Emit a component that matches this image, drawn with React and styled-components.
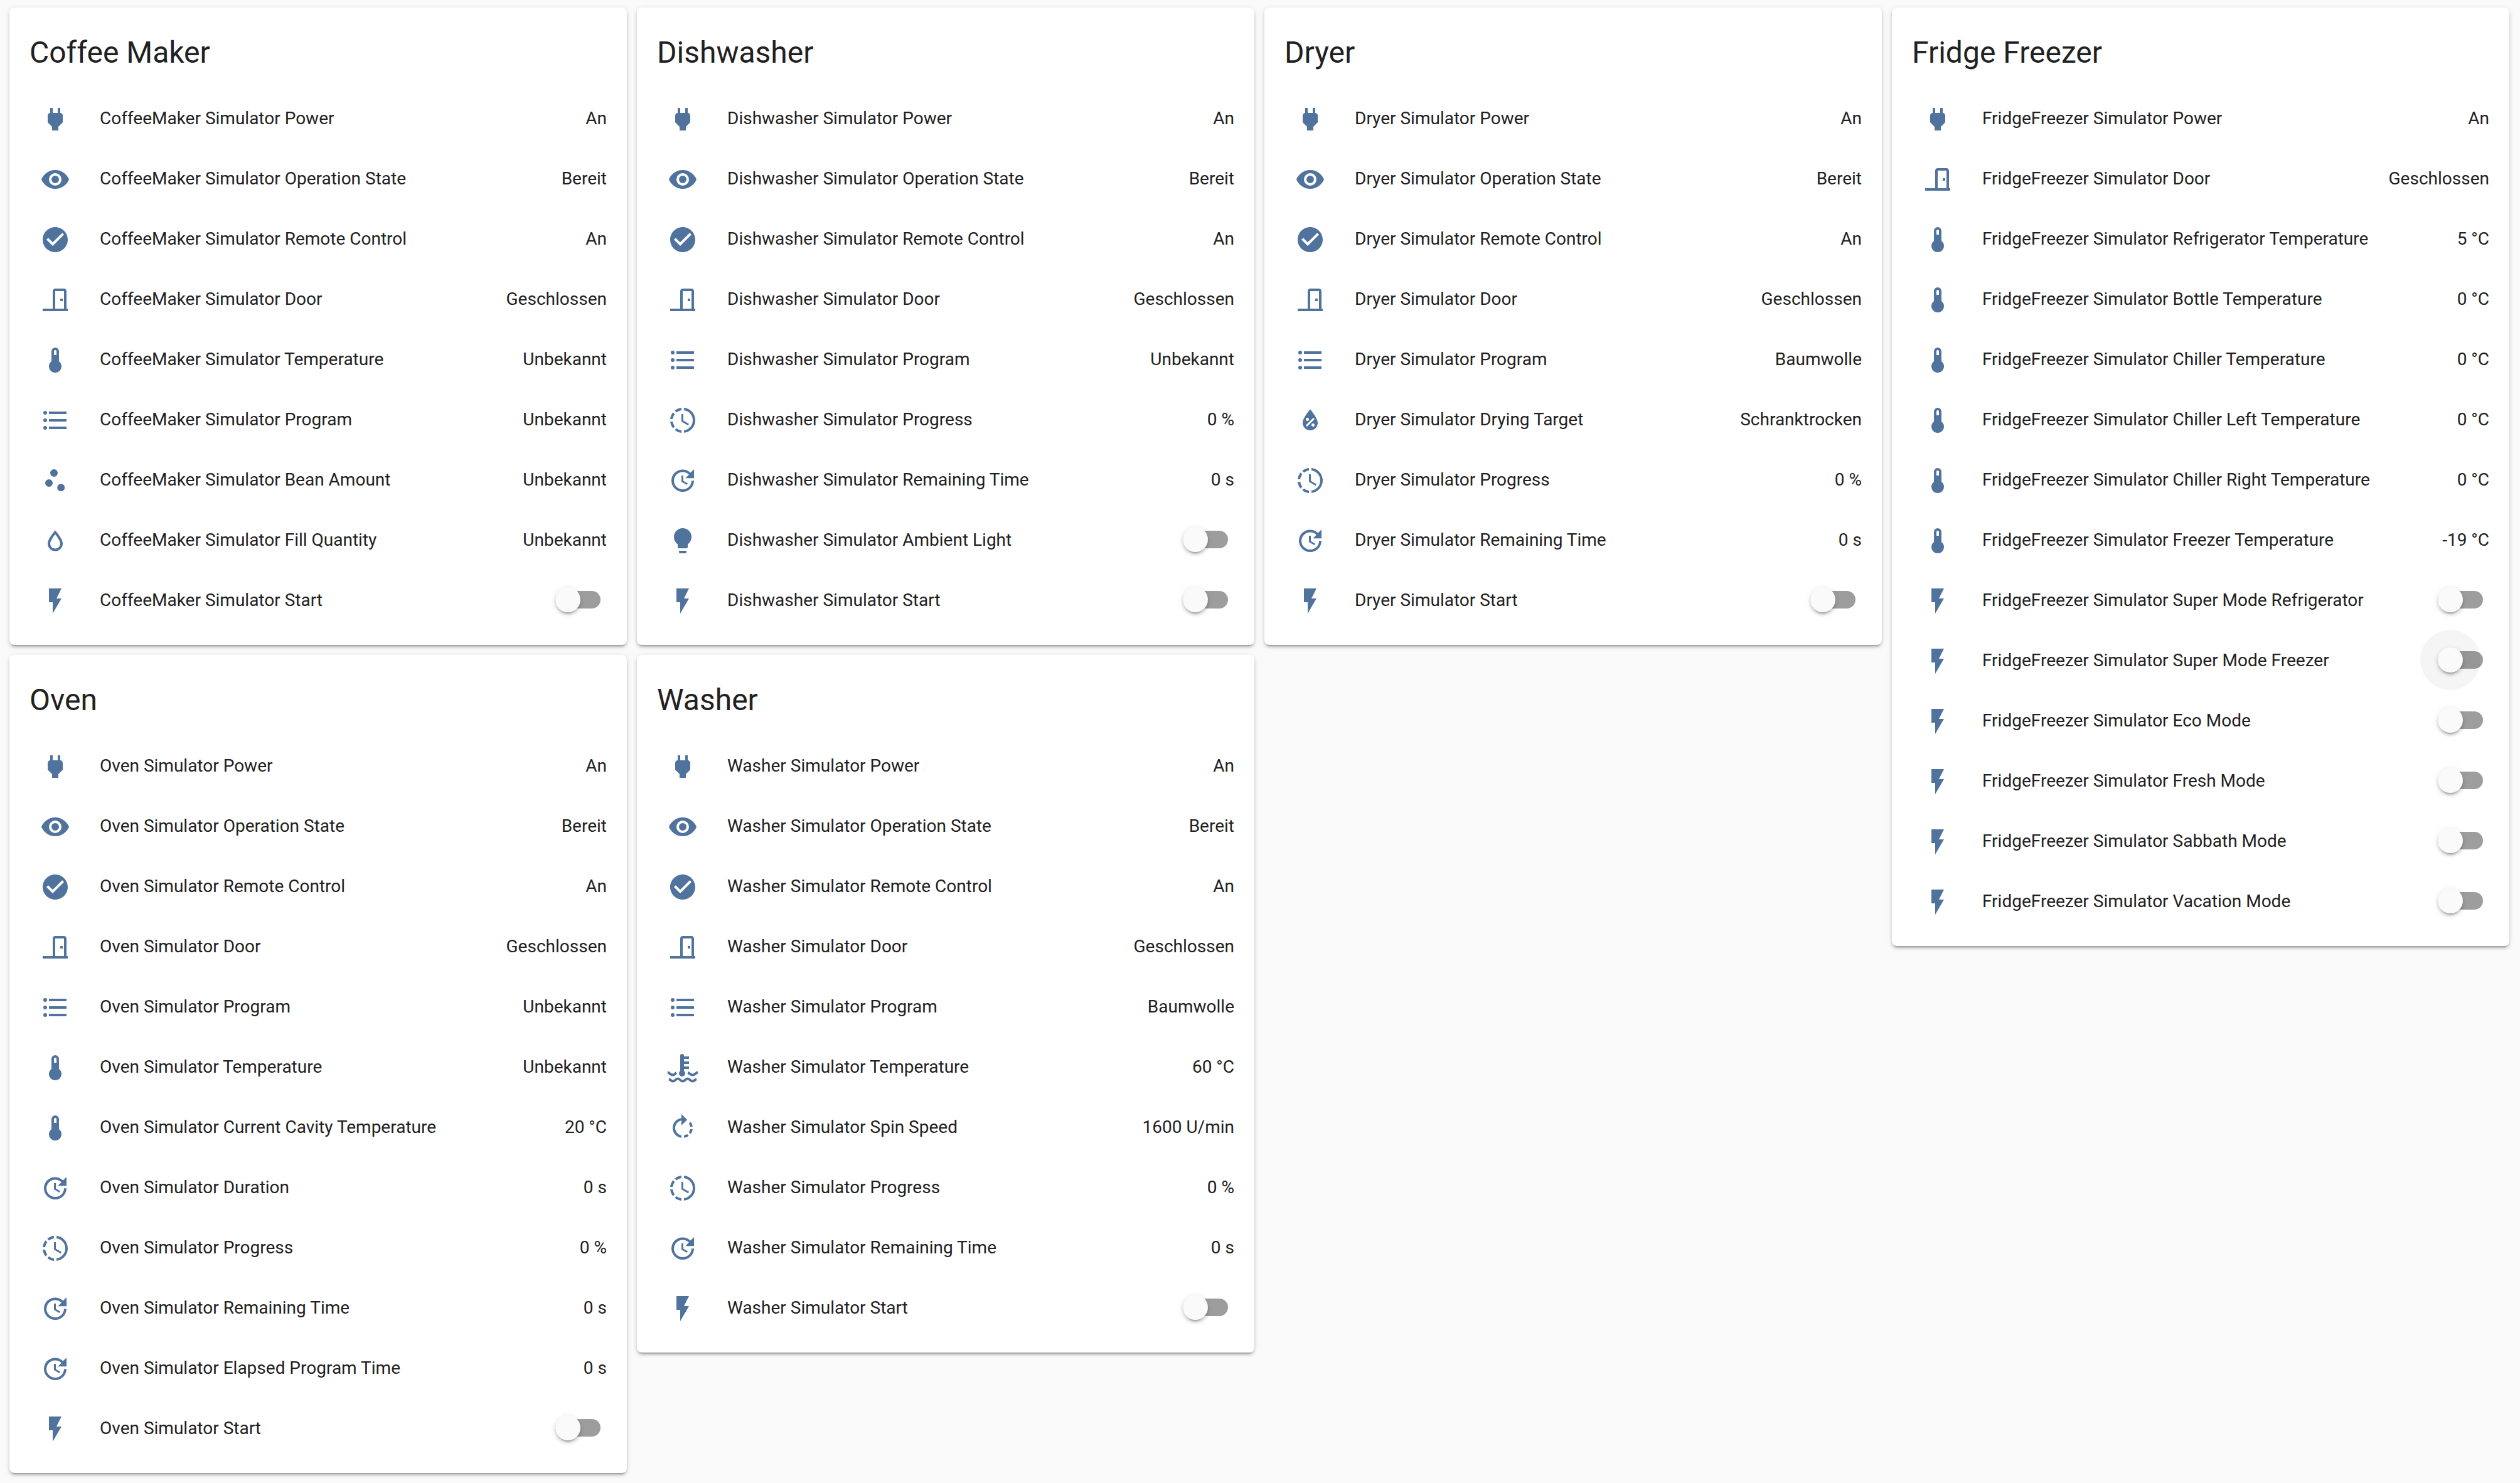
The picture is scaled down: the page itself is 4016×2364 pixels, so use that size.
import React from 'react';
import styled, { createGlobalStyle } from 'styled-components';

const GlobalStyle = createGlobalStyle`
  *, *::before, *::after { box-sizing: border-box; }
  body {
    margin: 0;
    background: #fafafa;
    color: #212121;
    font-family: Roboto, "Noto Sans", sans-serif;
    -webkit-font-smoothing: antialiased;
  }
`;

const ICONS = {
  plug: 'M16,7V3H14V7H10V3H8V7H8C7,7 6,8 6,9V14.5L9.5,18V21H14.5V18L18,14.5V9C18,8 17,7 16,7Z',
  eye: 'M12,9A3,3 0 0,0 9,12A3,3 0 0,0 12,15A3,3 0 0,0 15,12A3,3 0 0,0 12,9M12,17A5,5 0 0,1 7,12A5,5 0 0,1 12,7A5,5 0 0,1 17,12A5,5 0 0,1 12,17M12,4.5C7,4.5 2.73,7.61 1,12C2.73,16.39 7,19.5 12,19.5C17,19.5 21.27,16.39 23,12C21.27,7.61 17,4.5 12,4.5Z',
  check: 'M12 2C6.5 2 2 6.5 2 12S6.5 22 12 22 22 17.5 22 12 17.5 2 12 2M10 17L5 12L6.41 10.59L10 14.17L17.59 6.58L19 8L10 17Z',
  door: 'M16,11H18V13H16V11M12,3H19C20.11,3 21,3.89 21,5V19H22V21H2V19H10V5C10,3.89 10.89,3 12,3M12,5V19H19V5H12Z',
  thermometer: 'M15 13V5A3 3 0 0 0 9 5V13A5 5 0 1 0 15 13M12 4A1 1 0 0 1 13 5V8H11V5A1 1 0 0 1 12 4Z',
  list: 'M7,5H21V7H7V5M7,13V11H21V13H7M4,4.5A1.5,1.5 0 0,1 5.5,6A1.5,1.5 0 0,1 4,7.5A1.5,1.5 0 0,1 2.5,6A1.5,1.5 0 0,1 4,4.5M4,10.5A1.5,1.5 0 0,1 5.5,12A1.5,1.5 0 0,1 4,13.5A1.5,1.5 0 0,1 2.5,12A1.5,1.5 0 0,1 4,10.5M7,19V17H21V19H7M4,16.5A1.5,1.5 0 0,1 5.5,18A1.5,1.5 0 0,1 4,19.5A1.5,1.5 0 0,1 2.5,18A1.5,1.5 0 0,1 4,16.5Z',
  dots: 'M7,11A3,3 0 0,1 10,14A3,3 0 0,1 7,17A3,3 0 0,1 4,14A3,3 0 0,1 7,11M11,3A3,3 0 0,1 14,6A3,3 0 0,1 11,9A3,3 0 0,1 8,6A3,3 0 0,1 11,3M16.6,14.6A3,3 0 0,1 19.6,17.6A3,3 0 0,1 16.6,20.6A3,3 0 0,1 13.6,17.6A3,3 0 0,1 16.6,14.6Z',
  waterOutline: 'M12,3.77L11.25,4.61C11.25,4.61 9.97,6.06 8.68,7.94C7.39,9.82 6,12.07 6,14.23A6,6 0 0,0 12,20.23A6,6 0 0,0 18,14.23C18,12.07 16.61,9.82 15.32,7.94C14.03,6.06 12.75,4.61 12.75,4.61L12,3.77M12,6.9C12.44,7.42 12.84,7.85 13.68,9.07C14.89,10.83 16,13.07 16,14.23C16,16.45 14.22,18.23 12,18.23C9.78,18.23 8,16.45 8,14.23C8,13.07 9.11,10.83 10.32,9.07C11.16,7.85 11.56,7.42 12,6.9Z',
  flash: 'M7,2V13H10V22L17,10H13L17,2H7Z',
  progress: 'M13,2.03V2.05L13,4.05C17.39,4.59 20.5,8.58 19.96,12.97C19.5,16.61 16.64,19.5 13,19.93V21.93C18.5,21.38 22.5,16.5 21.95,11C21.5,6.25 17.73,2.5 13,2.03M11,2.06C9.05,2.25 7.19,3 5.67,4.26L7.1,5.74C8.22,4.84 9.57,4.26 11,4.06V2.06M4.26,5.67C3,7.19 2.25,9.04 2.05,11H4.05C4.24,9.58 4.8,8.23 5.69,7.1L4.26,5.67M2.06,13C2.26,14.96 3.03,16.81 4.27,18.33L5.69,16.9C4.81,15.77 4.24,14.42 4.06,13H2.06M7.1,18.37L5.67,19.74C7.18,21 9.04,21.79 11,22V20C9.58,19.82 8.23,19.25 7.1,18.37M12.5,7V12.25L17,14.92L16.25,16.15L11,13V7H12.5Z',
  update: 'M21,10.12H14.22L16.96,7.3C14.23,4.6 9.81,4.5 7.08,7.2C4.35,9.91 4.35,14.28 7.08,17C9.81,19.7 14.23,19.7 16.96,17C18.32,15.65 19,14.08 19,12.1H21C21,14.08 20.12,16.65 18.36,18.39C14.85,21.87 9.15,21.87 5.64,18.39C2.14,14.92 2.11,9.28 5.62,5.81C9.13,2.34 14.76,2.34 18.27,5.81L21,3V10.12M12.5,8V12.25L16,14.33L15.28,15.54L11,13V8H12.5Z',
  bulb: 'M12,2A7,7 0 0,0 5,9C5,11.38 6.19,13.47 8,14.74V17A1,1 0 0,0 9,18H15A1,1 0 0,0 16,17V14.74C17.81,13.47 19,11.38 19,9A7,7 0 0,0 12,2M9,21A1,1 0 0,0 10,22H14A1,1 0 0,0 15,21V20H9V21Z',
  waterPercent: 'M12,3.25C12,3.25 6,10 6,14C6,17.32 8.69,20 12,20A6,6 0 0,0 18,14C18,10 12,3.25 12,3.25M14.47,9.97L15.53,11.03L9.53,17.03L8.47,15.97M9.75,10A1.25,1.25 0 0,1 11,11.25A1.25,1.25 0 0,1 9.75,12.5A1.25,1.25 0 0,1 8.5,11.25A1.25,1.25 0 0,1 9.75,10M14.25,14.5A1.25,1.25 0 0,1 15.5,15.75A1.25,1.25 0 0,1 14.25,17A1.25,1.25 0 0,1 13,15.75A1.25,1.25 0 0,1 14.25,14.5Z',
  coolant: 'M10,2.5A1.5,1.5 0 0,1 13,2.5V3H17V5H13V7H17V9H13V11H17V13H13V14.5A2.5,2.5 0 1,1 10,14.5Z',
  rotate: 'M16.89,15.5L18.31,16.89C19.21,15.73 19.76,14.39 19.93,13H17.91C17.77,13.87 17.43,14.72 16.89,15.5M13,17.9V19.92C14.39,19.75 15.74,19.21 16.9,18.31L15.46,16.87C14.71,17.41 13.87,17.76 13,17.9M19.93,11C19.76,9.61 19.21,8.27 18.31,7.11L16.89,8.53C17.43,9.28 17.77,10.13 17.91,11M15.55,5.55L11,1V4.07C7.06,4.56 4,7.92 4,12C4,16.08 7.05,19.44 11,19.93V17.91C8.16,17.43 6,14.97 6,12C6,9.03 8.16,6.57 11,6.09V10L15.55,5.55Z',
};

// Icon parts drawn as lines on top of the filled shape.
const ICON_LINES = {
  coolant:
    'M0,15.8C1.8,16 2.2,17.8 4,17.8C5.5,17.8 6,16.6 7,16M16,16C17.4,16.2 18.2,17.8 20,17.8C21.8,17.8 22.2,16 24,15.8M1,21.1C2.2,21.4 2.7,22.8 4.2,22.8C6,22.8 6.3,20.8 8.1,20.8C9.9,20.8 10.2,22.8 12,22.8C13.8,22.8 14.1,20.8 15.9,20.8C17.7,20.8 18,22.8 19.8,22.8C21.3,22.8 21.8,21.4 23,21.1',
};

const OFF = { toggle: true };
const OFF_HOVERED = { toggle: true, hovered: true };

const COLUMNS = [
  [
    {
      title: 'Coffee Maker',
      device: 'CoffeeMaker Simulator',
      rows: [
        ['plug', 'Power', 'An'],
        ['eye', 'Operation State', 'Bereit'],
        ['check', 'Remote Control', 'An'],
        ['door', 'Door', 'Geschlossen'],
        ['thermometer', 'Temperature', 'Unbekannt'],
        ['list', 'Program', 'Unbekannt'],
        ['dots', 'Bean Amount', 'Unbekannt'],
        ['waterOutline', 'Fill Quantity', 'Unbekannt'],
        ['flash', 'Start', OFF],
      ],
    },
    {
      title: 'Oven',
      device: 'Oven Simulator',
      rows: [
        ['plug', 'Power', 'An'],
        ['eye', 'Operation State', 'Bereit'],
        ['check', 'Remote Control', 'An'],
        ['door', 'Door', 'Geschlossen'],
        ['list', 'Program', 'Unbekannt'],
        ['thermometer', 'Temperature', 'Unbekannt'],
        ['thermometer', 'Current Cavity Temperature', '20 °C'],
        ['update', 'Duration', '0 s'],
        ['progress', 'Progress', '0 %'],
        ['update', 'Remaining Time', '0 s'],
        ['update', 'Elapsed Program Time', '0 s'],
        ['flash', 'Start', OFF],
      ],
    },
  ],
  [
    {
      title: 'Dishwasher',
      device: 'Dishwasher Simulator',
      rows: [
        ['plug', 'Power', 'An'],
        ['eye', 'Operation State', 'Bereit'],
        ['check', 'Remote Control', 'An'],
        ['door', 'Door', 'Geschlossen'],
        ['list', 'Program', 'Unbekannt'],
        ['progress', 'Progress', '0 %'],
        ['update', 'Remaining Time', '0 s'],
        ['bulb', 'Ambient Light', OFF],
        ['flash', 'Start', OFF],
      ],
    },
    {
      title: 'Washer',
      device: 'Washer Simulator',
      rows: [
        ['plug', 'Power', 'An'],
        ['eye', 'Operation State', 'Bereit'],
        ['check', 'Remote Control', 'An'],
        ['door', 'Door', 'Geschlossen'],
        ['list', 'Program', 'Baumwolle'],
        ['coolant', 'Temperature', '60 °C'],
        ['rotate', 'Spin Speed', '1600 U/min'],
        ['progress', 'Progress', '0 %'],
        ['update', 'Remaining Time', '0 s'],
        ['flash', 'Start', OFF],
      ],
    },
  ],
  [
    {
      title: 'Dryer',
      device: 'Dryer Simulator',
      rows: [
        ['plug', 'Power', 'An'],
        ['eye', 'Operation State', 'Bereit'],
        ['check', 'Remote Control', 'An'],
        ['door', 'Door', 'Geschlossen'],
        ['list', 'Program', 'Baumwolle'],
        ['waterPercent', 'Drying Target', 'Schranktrocken'],
        ['progress', 'Progress', '0 %'],
        ['update', 'Remaining Time', '0 s'],
        ['flash', 'Start', OFF],
      ],
    },
  ],
  [
    {
      title: 'Fridge Freezer',
      device: 'FridgeFreezer Simulator',
      rows: [
        ['plug', 'Power', 'An'],
        ['door', 'Door', 'Geschlossen'],
        ['thermometer', 'Refrigerator Temperature', '5 °C'],
        ['thermometer', 'Bottle Temperature', '0 °C'],
        ['thermometer', 'Chiller Temperature', '0 °C'],
        ['thermometer', 'Chiller Left Temperature', '0 °C'],
        ['thermometer', 'Chiller Right Temperature', '0 °C'],
        ['thermometer', 'Freezer Temperature', '-19 °C'],
        ['flash', 'Super Mode Refrigerator', OFF],
        ['flash', 'Super Mode Freezer', OFF_HOVERED],
        ['flash', 'Eco Mode', OFF],
        ['flash', 'Fresh Mode', OFF],
        ['flash', 'Sabbath Mode', OFF],
        ['flash', 'Vacation Mode', OFF],
      ],
    },
  ],
];

const Dashboard = styled.main`
  display: grid;
  grid-template-columns: repeat(4, minmax(0, 1fr));
  align-items: start;
  gap: 16px;
  padding: 12px 17px 12px 15px;
`;

const Column = styled.div`
  display: flex;
  flex-direction: column;
  gap: 16px;
`;

const Card = styled.section`
  padding: 0 32px 32px;
  border-radius: 8px;
  background: #fff;
  box-shadow:
    0 4px 4px 0 rgba(0, 0, 0, 0.14),
    0 2px 10px 0 rgba(0, 0, 0, 0.12),
    0 6px 2px -4px rgba(0, 0, 0, 0.2);
`;

const Title = styled.h2`
  margin: 0;
  padding: 32px 0 24px;
  font-size: 48px;
  font-weight: 400;
  line-height: 80px;
`;

const Rows = styled.ul`
  display: flex;
  flex-direction: column;
  gap: 16px;
  margin: 0;
  padding: 0;
  list-style: none;
`;

const Row = styled.li`
  display: flex;
  align-items: center;
  height: 80px;
  font-size: 28px;
  line-height: 40px;
`;

const IconBox = styled.span`
  display: grid;
  place-items: center;
  flex: none;
  width: 82px;
  height: 80px;
  padding-top: 4px;
  margin-right: 30px;
`;

const Glyph = styled.svg`
  display: block;
  width: 48px;
  height: 48px;
  overflow: visible;
  fill: #50739d;
  fill-rule: evenodd;
`;

const GlyphLine = styled.path`
  fill: none;
  stroke: #50739d;
  stroke-width: 2;
`;

const Name = styled.span`
  flex: 1;
  min-width: 0;
  padding-top: 2px;
  overflow: hidden;
  text-overflow: ellipsis;
  white-space: nowrap;
`;

const Value = styled.span`
  flex: none;
  padding-top: 2px;
  margin-left: 16px;
  text-align: right;
`;

const Switch = styled.input`
  appearance: none;
  display: block;
  position: relative;
  flex: none;
  width: 72px;
  height: 28px;
  margin: 0 10px 0 16px;
  border-radius: 14px;
  background: #9d9d9d;
  cursor: pointer;

  &::before {
    content: '';
    position: absolute;
    top: -34px;
    left: -28px;
    width: 96px;
    height: 96px;
    border-radius: 50%;
    background: ${(p) => (p.$hovered ? 'rgba(0, 0, 0, 0.04)' : 'transparent')};
  }

  &::after {
    content: '';
    position: absolute;
    top: -6px;
    left: 0;
    width: 40px;
    height: 40px;
    border-radius: 50%;
    background: #fafafa;
    box-shadow:
      0 6px 2px -4px rgba(0, 0, 0, 0.2),
      0 4px 4px 0 rgba(0, 0, 0, 0.14),
      0 2px 10px 0 rgba(0, 0, 0, 0.12);
  }

  &:checked {
    background: #8fd3f4;
  }

  &:checked::after {
    left: 32px;
    background: #03a9f4;
  }
`;

function EntityRow({ id, icon, name, state }) {
  return (
    <Row>
      <IconBox>
        <Glyph viewBox="0 0 24 24" aria-hidden="true">
          <path d={ICONS[icon]} />
          {ICON_LINES[icon] && <GlyphLine d={ICON_LINES[icon]} />}
        </Glyph>
      </IconBox>
      {state.toggle ? (
        <>
          <Name as="label" htmlFor={id}>{name}</Name>
          <Switch id={id} type="checkbox" $hovered={state.hovered} />
        </>
      ) : (
        <>
          <Name>{name}</Name>
          <Value>{state}</Value>
        </>
      )}
    </Row>
  );
}

function EntitiesCard({ title, device, rows }) {
  return (
    <Card>
      <Title>{title}</Title>
      <Rows>
        {rows.map(([icon, label, state]) => (
          <EntityRow
            key={label}
            id={`${device} ${label}`.toLowerCase().replace(/ /g, '-')}
            icon={icon}
            name={`${device} ${label}`}
            state={state}
          />
        ))}
      </Rows>
    </Card>
  );
}

export default function App() {
  return (
    <>
      <GlobalStyle />
      <Dashboard>
        {COLUMNS.map((cards, index) => (
          <Column key={index}>
            {cards.map((card) => (
              <EntitiesCard key={card.title} {...card} />
            ))}
          </Column>
        ))}
      </Dashboard>
    </>
  );
}
